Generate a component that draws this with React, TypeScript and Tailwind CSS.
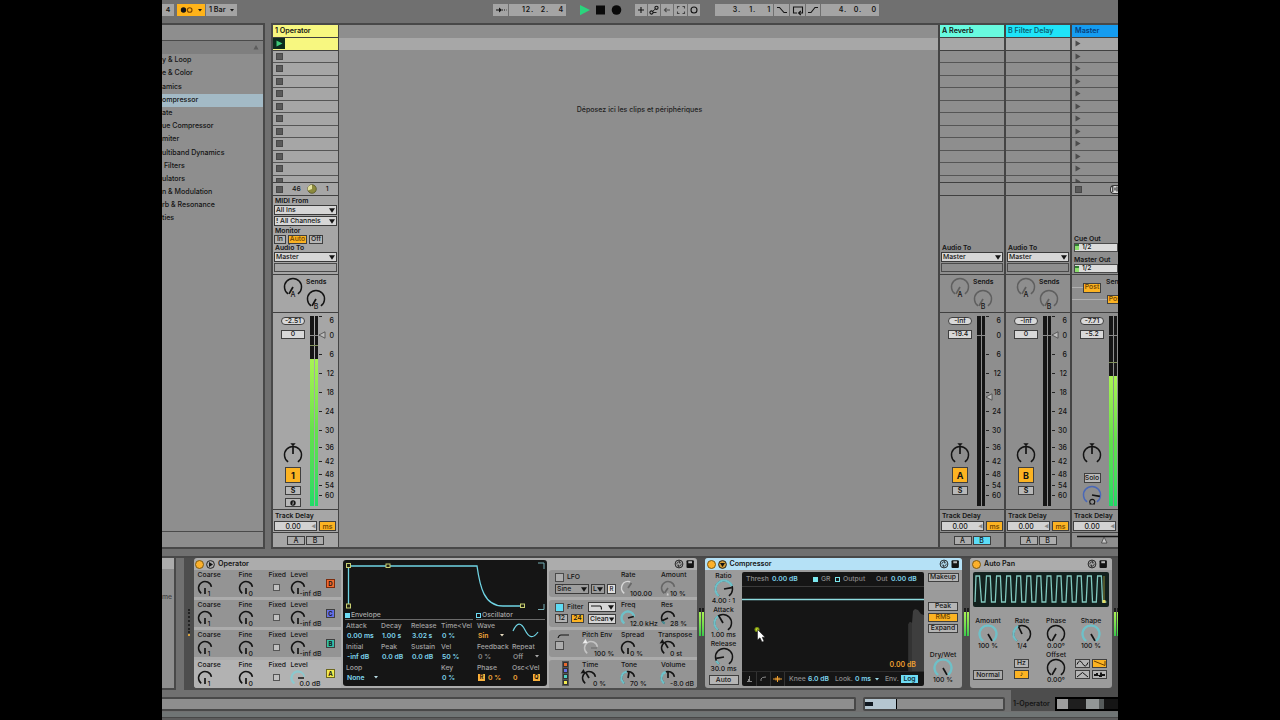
import type { ReactNode } from "react"
import clsx from "clsx"

const INK = "#141414"
const CYAN = "#6fd3e3"

function polar(c: number, r: number, deg: number) {
  const a = ((deg - 90) * Math.PI) / 180
  return [c + r * Math.cos(a), c + r * Math.sin(a)]
}

function arc(c: number, r: number, from: number, to: number) {
  const [x1, y1] = polar(c, r, from)
  const [x2, y2] = polar(c, r, to)
  return `M${x1} ${y1}A${r} ${r} 0 ${to - from > 180 ? 1 : 0} 1 ${x2} ${y2}`
}

type KnobProps = {
  r?: number
  at?: number
  from?: number
  to?: number
  ring?: string
  pointer?: string
  fill?: [number, number]
  fillColor?: string
  inner?: number
  children?: ReactNode
}

// 20px box, angles are clockwise from the top
function Knob({ r = 8.5, at = -150, from = -145, to = 145, ring = INK, pointer = INK, fill, fillColor = "#6fc0c8", inner = 0, children }: KnobProps) {
  const [x1, y1] = polar(10, inner, at)
  const [x2, y2] = polar(10, r - 0.5, at)
  return (
    <svg width="20" height="20" viewBox="0 0 20 20" fill="none" strokeWidth="1.5" className="block shrink-0 overflow-visible">
      <path d={arc(10, r, from, to)} stroke={ring} />
      {fill && <path d={arc(10, r, fill[0], fill[1])} stroke={fillColor} strokeWidth="2.2" />}
      <path d={`M${x1} ${y1}L${x2} ${y2}`} stroke={pointer} strokeWidth="1.7" />
      {children}
    </svg>
  )
}

function Select({ children, className }: { children: ReactNode; className?: string }) {
  return (
    <div className={clsx("flex h-[10px] items-center justify-between border border-[#3a3a3a] pl-px pr-px leading-none", className ?? "bg-[#d6d6d6]")}>
      <span className="whitespace-pre">{children}</span>
      <svg width="6" height="5" viewBox="0 0 6 5"><path d="M0 .3H6L3 4.7Z" fill={INK} /></svg>
    </div>
  )
}

function Btn({ children, className }: { children?: ReactNode; className?: string }) {
  return (
    <div className={clsx("flex shrink-0 items-center justify-center border border-[#3f3f3f] leading-none", className)}>{children}</div>
  )
}

/* ---------- transport ---------- */

function ToolIcon({ children, className }: { children: ReactNode; className: string }) {
  return (
    <div className={clsx("flex h-3 items-center justify-center bg-[#a4a4a4]", className)}>
      <svg width="12" height="12" viewBox="0 0 12 12" fill="none" stroke={INK} strokeWidth="1.1">{children}</svg>
    </div>
  )
}

function Position({ parts, className }: { parts: string[]; className: string }) {
  return (
    <div className={clsx("flex h-3 items-center justify-end bg-[#a4a4a4] pr-0.5 text-[7px] font-semibold", className)}>
      {parts.map((p, i) => (
        <span key={i} className="w-[15px] whitespace-pre text-right tracking-[0.8px]">{p}</span>
      ))}
    </div>
  )
}

function Transport() {
  return (
    <div className="flex h-[23px] items-start bg-[#707070] pt-1">
      <div className="flex h-3 w-[12px] items-center justify-center bg-[#a4a4a4] font-semibold">4</div>
      <div className="ml-[3px] flex h-3 w-[28px] items-center justify-between bg-[#ffb319] px-[3px]">
        <svg width="14" height="8" viewBox="0 0 14 8"><circle cx="3.5" cy="4" r="2.7" fill={INK} /><circle cx="9.7" cy="4" r="2.3" fill="none" stroke="#7a4300" strokeWidth="1.1" /></svg>
        <svg width="4" height="3" viewBox="0 0 4 3"><path d="M0 0H4L2 2.6Z" fill={INK} /></svg>
      </div>
      <div className="ml-px flex h-3 w-[31px] items-center justify-between bg-[#a4a4a4] px-[3px] text-[7.2px] font-semibold">
        1 Bar
        <svg width="4" height="3" viewBox="0 0 4 3"><path d="M0 0H4L2 2.6Z" fill={INK} /></svg>
      </div>
      <ToolIcon className="ml-[256px] w-[15px]"><path d="M1 6H6" /><path d="M4 3.5L7 6L4 8.5Z" fill={INK} stroke="none" /><path d="M7 6H11.5" strokeDasharray="1 1" /></ToolIcon>
      <Position parts={["12.", "2.", "4"]} className="ml-px w-[57px]" />
      <svg width="44" height="12" viewBox="0 0 44 12" className="ml-[13px]">
        <path d="M1 1L11 6L1 11.2Z" fill="#2bd47d" />
        <rect x="17" y="1.5" width="9" height="9" fill="#0a0a0a" />
        <circle cx="37.5" cy="6" r="4.8" fill="#0a0a0a" />
      </svg>
      <div className="ml-3 flex gap-px">
        <ToolIcon className="w-[12px]"><path d="M6 3V9M3 6H9" /></ToolIcon>
        <ToolIcon className="w-[12px]"><circle cx="3.5" cy="8.5" r="1.6" /><circle cx="8.5" cy="3.8" r="1.6" /><path d="M5 8.500L8.500 8.500M4.700 7.300L7.300 5" strokeWidth=".9" /></ToolIcon>
        <ToolIcon className="w-[12px]"><path d="M3 6H9M5.5 4L3.5 6L5.5 8" stroke="#4d4d4d" /></ToolIcon>
        <ToolIcon className="w-[13px]"><path d="M2.5 4.5V2.5H4.5M7.5 2.5H9.5V4.5M9.5 7.5V9.5H7.5M4.5 9.5H2.5V7.5" stroke="#444" /></ToolIcon>
        <ToolIcon className="w-[12px]"><circle cx="6" cy="6" r="3" /></ToolIcon>
      </div>
      <Position parts={["3.", "1.", "1"]} className="ml-[15px] w-[58px]" />
      <div className="ml-px flex gap-px">
        <ToolIcon className="w-[15px]"><path d="M1 3.5H3.5L8 8.5H11" /></ToolIcon>
        <ToolIcon className="w-[15px]"><path d="M5 9H1.5V3H10.5V9H7M8.8 7L6.6 9L8.8 11" /></ToolIcon>
        <ToolIcon className="w-[14px]"><path d="M1 8.5H4L8 3.5H11" /></ToolIcon>
      </div>
      <Position parts={["4.", "0.", "0"]} className="ml-px w-[58px]" />
    </div>
  )
}

/* ---------- browser ---------- */

const browserItems = [
  "y & Loop", "e & Color", "amics", "ompressor", "ate", "ue Compressor", "miter",
  "ultiband Dynamics", " Filters", "ulators", "n & Modulation", "rb & Resonance", "ties",
]

function Browser() {
  return (
    <div className="flex h-[526px] w-[103px] shrink-0 flex-col border-y-2 border-r-2 border-[#484848] bg-[#8e8e8e]">
      <div className="h-[16px] shrink-0 border-b border-[#4a4a4a]" />
      <div className="flex h-[13px] shrink-0 items-center justify-end bg-[#7f7f7f] pr-1">
        <svg width="6" height="6" viewBox="0 0 6 6"><path d="M3 0L5.5 4.5H.5Z" fill="#5c5c5c" /></svg>
      </div>
      <div className="grow">
        {browserItems.map((t) => (
          <div
            key={t}
            className={clsx("flex h-[13.18px] items-center whitespace-pre text-[7.05px]", t === "ompressor" && "bg-[#a3bac6]")}
          >
            {t}
          </div>
        ))}
      </div>
      <div className="h-[16px] border-t border-[#4a4a4a]" />
    </div>
  )
}

/* ---------- session ---------- */

const slots = Array.from({ length: 11 }, (_, i) => i)

function Square() {
  return <div className="size-[7px] border border-[#484848] bg-[#5a5a5a]" />
}

function Slots({ kind }: { kind: "track" | "return" | "master" }) {
  const tri = <svg width="6" height="7" viewBox="0 0 6 7"><path d="M.5 .5L5.5 3.5L.5 6.5Z" fill="#4c4c4c" /></svg>
  return (
    <div className="h-[145px] overflow-hidden border-b border-[#404040]">
      <div className={clsx("flex h-[12.5px] items-center border-b border-[#404040]", kind === "track" ? "bg-[#f7f780]" : "bg-[#a7a7a7] pl-[3px]")}>
        {kind === "track" && (
          <div className="flex h-[11px] w-[12px] items-center justify-center bg-[#0d2b1c]">
            <svg width="7" height="7" viewBox="0 0 7 7"><path d="M.5 .5L6.5 3.5L.5 6.5Z" fill="#3ec878" /></svg>
          </div>
        )}
        {kind === "master" && tri}
      </div>
      {slots.map((i) => (
        <div key={i} className="flex h-[12.5px] items-center border-b border-[#555] pl-[3px]">
          {kind === "track" && <Square />}
          {kind === "master" && tri}
        </div>
      ))}
    </div>
  )
}

// distance in pixels of every mark from the one above it
const scale = [
  { t: "6", d: 4.5 }, { t: "0", d: 15 }, { t: "6", d: 19.5 }, { t: "12", d: 19 },
  { t: "18", d: 19 }, { t: "24", d: 18.5 }, { t: "30", d: 19.5 }, { t: "36", d: 16.5 },
  { t: "42", d: 14.5 }, { t: "48", d: 12.5 }, { t: "54", d: 11 }, { t: "60", d: 10.5 },
]

function Scale() {
  return (
    <div className="w-[16px] pl-px">
      {scale.map((m, i) => (
        <div key={i} className="flex items-end justify-between" style={{ height: m.d }}>
          <span className={clsx("h-px w-[3px] shrink-0 bg-[#222]", i === 0 && "-translate-y-1", i === 1 && "opacity-0")} />
          <span className="translate-y-1/2 text-[7px] leading-[8px]">{m.t}</span>
        </div>
      ))}
    </div>
  )
}

function Meter({ empty }: { empty: number }) {
  return (
    <div className="relative flex h-[190px] w-[8px] shrink-0 gap-px">
      {[0, 1].map((i) => (
        <div key={i} className="flex grow flex-col bg-[#151515]">
          <div style={{ height: empty }} />
          <div className="grow bg-linear-to-b from-[#a8f354] via-[#62e04c] to-[#1edb66]" />
        </div>
      ))}
      {empty < 190 && <div className="absolute inset-x-0 h-px bg-[#7f8f5a]" style={{ top: empty - 14 }} />}
      <div className="absolute inset-x-0 top-[19px] h-px bg-[#8a8a8a]" />
    </div>
  )
}

function Handle() {
  return <svg width="8" height="8" viewBox="0 0 8 8"><path d="M7 .8V7.2L1 4Z" fill="#bdbdbd" stroke="#3a3a3a" strokeWidth=".7" /></svg>
}

function PanKnob() {
  return (
    <Knob at={0} inner={1}>
      <path d="M7.3 -1.8H12.7L10 1.2Z" fill={INK} />
    </Knob>
  )
}

function Sends({ dim }: { dim?: boolean }) {
  const c = dim ? "#5f5f5f" : INK
  return (
    <div className="flex h-[38px] border-b border-[#404040]">
      <div className="ml-[10px] mt-[2px] w-[20px] text-center">
        <Knob ring={c} pointer={c} />
        <div className="-mt-[6px] text-[7px] leading-[8px]">A</div>
      </div>
      <div className="ml-[3px] mt-[3px] w-[20px]">
        <div className="whitespace-nowrap font-semibold leading-[8px]">Sends</div>
        <div className="mt-[3px]"><Knob ring={c} pointer={c} /></div>
        <div className="-mt-[6px] text-center text-[7px] leading-[8px]">B</div>
      </div>
    </div>
  )
}

function TrackDelay({ children, unit }: { children: ReactNode; unit?: string }) {
  return (
    <>
      <div className="h-[23px] border-b border-[#404040] pl-px pt-0.5">
        <div className="whitespace-nowrap pl-px font-semibold leading-[8px]">Track Delay</div>
        <div className="mt-[1px] flex gap-px">
          <Btn className="h-[10px] w-[43px] bg-[#d2d2d2] text-[7px]">
            <span className="grow text-center">0.00</span>
            <span className="text-[5px] text-[#888]">◀</span>
          </Btn>
          {unit && <Btn className="ml-px h-[10px] w-[17px] bg-[#fcb322] text-[7px] text-[#6b3f00]">{unit}</Btn>}
        </div>
      </div>
      <div className="flex h-[14px] items-center justify-center gap-px">{children}</div>
    </>
  )
}

type StripProps = {
  title: string
  head: string
  body: string
  kind: "track" | "return"
  letter: string
  peak: string
  vol: string
  handle: number
  crossB?: boolean
}

function Strip({ title, head, body, kind, letter, peak, vol, handle, crossB }: StripProps) {
  const track = kind === "track"
  return (
    <div className={clsx("h-[523px] w-[66px] shrink-0 border-[#444]", track ? "border-r" : "border-r-2", body)}>
      <div className={clsx("flex h-[13px] items-center border-b border-[#404040] pl-0.5 text-[7.2px] font-semibold", head)}>{title}</div>
      <Slots kind={kind} />
      <div className="flex h-[13px] items-center border-b border-[#404040] pl-[3px]">
        {track && (
          <>
            <Square />
            <span className="ml-[9px]">46</span>
            <svg width="10" height="10" viewBox="0 0 10 10" className="ml-[6px]">
              <circle cx="5" cy="5" r="4.3" fill="#8c8a3c" stroke="#55542a" strokeWidth=".8" />
              <path d="M5 5V.7A4.3 4.3 0 0 0 1 6.5Z" fill="#e4e2a0" />
            </svg>
            <span className="ml-[9px]">1</span>
          </>
        )}
      </div>
      <div className="flex h-[79px] flex-col justify-end border-b border-[#404040] px-px pb-0.5">
        {track && (
          <>
            <div className="pl-px font-semibold leading-[8px]">MIDI From</div>
            <Select>All Ins</Select>
            <Select className="mt-px bg-[#d6d6d6]"><span className="font-bold">⁞</span> All Channels</Select>
            <div className="mt-px pl-px font-semibold leading-[8px]">Monitor</div>
            <div className="flex gap-0.5">
              <Btn className="h-[9px] w-[12px] bg-[#b5b5b5]">In</Btn>
              <Btn className="h-[9px] w-[19px] bg-[#fcb322] text-[#6b3f00]">Auto</Btn>
              <Btn className="h-[9px] w-[14px] bg-[#b5b5b5]">Off</Btn>
            </div>
          </>
        )}
        <div className="pl-px font-semibold leading-[8px]">Audio To</div>
        <Select>Master</Select>
        <div className="mt-px h-[9px] border border-[#4a4a4a]" />
      </div>
      <Sends dim={!track} />
      <div className="flex h-[197px] border-b border-[#404040] pt-[3px]">
        <div className="flex w-[37px] flex-col items-center pl-[3px]">
          <Btn className="mt-px h-[8px] w-[24px] rounded-full bg-[#d8d8d8]">{peak}</Btn>
          <Btn className="mt-[5px] h-[9px] w-[24px] bg-[#d8d8d8]">{vol}</Btn>
          <div className="mt-[106px]"><PanKnob /></div>
          <Btn className="mt-[2px] h-[16px] w-[16px] bg-[#fcb322] text-[9px] font-bold">{letter}</Btn>
          <Btn className="mt-[3px] h-[9px] w-[16px] bg-[#b8b8b8] text-[7px] font-bold">S</Btn>
          {track && (
            <Btn className="mt-[3px] h-[9px] w-[16px] bg-[#b8b8b8]">
              <svg width="6" height="6" viewBox="0 0 6 6"><circle cx="3" cy="3" r="2.7" fill={INK} /><path d="M2.3 4.2H3.2V1.5" stroke="#ccc" strokeWidth=".8" fill="none" /></svg>
            </Btn>
          )}
        </div>
        <Meter empty={track ? 43 : 190} />
        <div className="relative">
          <Scale />
          <div className="absolute left-0" style={{ top: handle }}><Handle /></div>
        </div>
      </div>
      <TrackDelay unit="ms">
        <Btn className="h-[9px] w-[18px] bg-[#acacac] text-[7px]">A</Btn>
        <Btn className={clsx("h-[9px] w-[18px] text-[7px]", crossB ? "bg-[#5bdcf7]" : "bg-[#acacac]")}>B</Btn>
      </TrackDelay>
    </div>
  )
}

function Output({ label }: { label: string }) {
  return (
    <div>
      <div className="whitespace-nowrap font-semibold leading-[9px]">{label}</div>
      <div className="flex h-[9px] items-center gap-[3px] border border-[#4a4a4a] bg-[#dcdcdc] leading-none">
        <span className="h-[6px] w-[4px] border-t-2 border-[#327d35] bg-[#8de06e]" />1/2
      </div>
    </div>
  )
}

function MasterStrip() {
  return (
    <div className="h-[523px] w-[47px] overflow-hidden bg-[#8e8e8e]">
      <div className="flex h-[13px] items-center border-b border-[#404040] bg-[#159cf0] pl-[3px] text-[7.2px] font-semibold text-[#07407c]">Master</div>
      <Slots kind="master" />
      <div className="flex h-[13px] items-center justify-between border-b border-[#404040] pl-[3px]">
        <Square />
        <div className="flex h-[9px] w-[8px] items-center rounded-l-sm border border-r-0 border-[#333] bg-[#d8d8d8] pl-px">
          <svg width="6" height="6" viewBox="0 0 6 6"><path d="M.8 0V6M3 1.5V4.5M5 .5V5.5" stroke={INK} /></svg>
        </div>
      </div>
      <div className="flex h-[79px] flex-col justify-end gap-[3.5px] border-b border-[#404040] pb-px pl-0.5"><Output label="Cue Out" /><Output label="Master Out" /></div>
      <div className="flex h-[38px] flex-col border-b border-[#404040] pt-[4px]">
        <div className="flex h-[13px] items-center">
          <span className="mt-1 h-px w-[11px] shrink-0 bg-[#b0b0b0]" />
          <Btn className="mt-1 h-[10px] w-[18px] bg-[#fcb322] text-[#6b3f00]">Post</Btn>
          <span className="-mt-[6px] ml-[5px] font-semibold">Sends</span>
        </div>
        <div className="mt-[2px] flex h-[11px] items-center">
          <span className="h-px w-[35px] shrink-0 bg-[#b0b0b0]" />
          <Btn className="h-[9px] w-[18px] bg-[#fcb322] text-[#6b3f00]">Post</Btn>
        </div>
      </div>
      <div className="flex h-[197px] border-b border-[#404040] pt-[3px]">
        <div className="flex w-[37px] shrink-0 flex-col items-center pl-[3px]">
          <Btn className="mt-px h-[8px] w-[24px] rounded-full bg-[#d8d8d8]">-7.71</Btn>
          <Btn className="mt-[5px] h-[9px] w-[24px] bg-[#d8d8d8]">-5.2</Btn>
          <div className="mt-[106px]"><PanKnob /></div>
          <Btn className="mt-[8px] h-[10px] w-[17px] bg-[#b8b8b8]">Solo</Btn>
          <div className="mt-[2px]">
            <Knob ring="#4a68b8" at={100}>
              <path d="M7.5 19H9A2.5 2.5 0 1 1 11.5 19H13" stroke={INK} strokeWidth="1.2" />
            </Knob>
          </div>
        </div>
        <Meter empty={60} />
      </div>
      <TrackDelay>
        <svg width="46" height="12" viewBox="0 0 46 12" fill="none"><path d="M5 2.5H46" stroke={INK} strokeWidth="1.5" /><path d="M32 3L35 9H29.5Z" fill="#c8c8c8" stroke="#333" strokeWidth=".7" /></svg>
      </TrackDelay>
    </div>
  )
}

function Session() {
  return (
    <div className="ml-[6px] flex h-[526px] grow overflow-hidden border-y-2 border-l-2 border-[#484848] bg-[#8e8e8e]">
      <Strip title="1 Operator" head="bg-[#f7f780]" body="bg-[#a6a6a6]" kind="track" letter="1" peak="-2.51" vol="0" handle={15} />
      <div className="w-[601px] shrink-0 border-r-2 border-[#444] text-center">
        <div className="mt-[13px] h-[12px] bg-[#a7a7a7]" />
        <div className="pl-[2px] pt-[55px] text-[7px] tracking-[0.02px] text-[#222]">Déposez ici les clips et périphériques</div>
      </div>
      <Strip title="A Reverb" head="bg-[#68fadf]" body="bg-[#8e8e8e]" kind="return" letter="A" peak="-Inf" vol="-19.4" handle={77} crossB />
      <Strip title="B Filter Delay" head="bg-[#1fe4f8] text-[#0a6274]" body="bg-[#8e8e8e]" kind="return" letter="B" peak="-Inf" vol="0" handle={15} />
      <MasterStrip />
    </div>
  )
}

/* ---------- devices ---------- */

function PowerDot() {
  return <span className="size-[9px] rounded-full border border-[#7d5a14] bg-[#fdb12b]" />
}

function TitleIcons() {
  return (
    <svg width="21" height="10" viewBox="0 0 21 10" fill="none" className="ml-auto">
      <circle cx="5" cy="5" r="3.9" stroke={INK} strokeWidth=".9" />
      <path d="M3 5.5A2 2 0 0 1 6 3.2M7 4.5A2 2 0 0 1 4 6.8M5.2 2.4L6.4 3.4L5 4.2M4.9 7.6L3.6 6.7L5 5.8" stroke={INK} strokeWidth=".8" />
      <rect x="12.5" y="1.3" width="7.4" height="7.6" rx="1" fill={INK} />
      <path d="M14.3 2.2H18V4.2H14.3Z" fill="#bbb" />
    </svg>
  )
}

function DevMeter() {
  return (
    <div className="mt-[50px] flex h-[28px] w-[8px] shrink-0 justify-center gap-px">
      {[0, 1].map((i) => (
        <div key={i} className="flex w-[2px] flex-col bg-[#1c1c1c]">
          <div className="h-1" />
          <div className="grow bg-linear-to-b from-[#a8f354] to-[#35c94a]" />
        </div>
      ))}
    </div>
  )
}

// label on top, knob under it, value tucked in at the lower right of the ring
function Dial({ label, value, className, children, shift = "left-[11px]" }: { label: string; value: string; className: string; children: ReactNode; shift?: string }) {
  return (
    <div className={clsx("relative shrink-0", className)}>
      <div className="whitespace-nowrap leading-[8px]">{label}</div>
      <div className="-ml-[3px] -mt-px">{children}</div>
      <div className={clsx("absolute top-[19px] whitespace-nowrap leading-[8px]", shift)}>{value}</div>
    </div>
  )
}

const oscillators = [
  { id: "D", color: "bg-[#ee6a2f] border-[#7c2b0c]" },
  { id: "C", color: "bg-[#6670e6] border-[#2c3390]" },
  { id: "B", color: "bg-[#35bfa5] border-[#0e5e4e]" },
  { id: "A", color: "bg-[#f2ea4f] border-[#6d681c]" },
]

function SmallKnob(props: KnobProps) {
  return <Knob r={6.5} from={-145} to={80} at={180} {...props} />
}

function OscRow({ id, color }: { id: string; color: string }) {
  const last = id === "A"
  return (
    <div className={clsx("flex pl-[3.5px] pt-px", last ? "h-[29px] bg-[#b2b2b2]" : "mb-[3px] h-[27px] bg-[#949494]")}>
      <Dial label="Coarse" value="1" className="w-[41px]" shift="left-[10px]"><SmallKnob /></Dial>
      <Dial label="Fine" value="0" className="w-[30px]" shift="left-[10px]"><SmallKnob /></Dial>
      <div className="w-[22px]">
        <div className="leading-[8px]">Fixed</div>
        <div className="ml-[4px] mt-[5px] size-[7px] border border-[#555] bg-[#c0c0c0]" />
      </div>
      <Dial label="Level" value={last ? "0.0 dB" : "-inf dB"} className="w-[35.5px]" shift="left-[9px]">
        {last ? <SmallKnob ring="#8cc8ce" fill={[-145, 30]} fillColor="#8cc8ce" at={90} /> : <SmallKnob />}
      </Dial>
      <Btn className={clsx("mt-[8px] size-[9px] text-[6px] font-bold", color)}>{id}</Btn>
    </div>
  )
}

function Param({ label, value, tone = "text-[#7fd6ee]" }: { label: string; value: ReactNode; tone?: string }) {
  return (
    <div className="h-[21px] whitespace-nowrap leading-[9.5px]">
      <div className="text-[#a2a2a2]">{label}</div>
      <div className={clsx("flex items-center pl-px font-semibold", tone)}>{value}</div>
    </div>
  )
}

function Caret({ color }: { color: string }) {
  return <svg width="4" height="3" viewBox="0 0 4 3"><path d="M0 0H4L2 2.6Z" fill={color} /></svg>
}

function OperatorDisplay() {
  return (
    <div className="mx-[2px] mt-[2px] h-[126px] w-[204px] shrink-0 rounded-[3px] bg-[#151515]">
      <svg width="204" height="51" viewBox="0 0 204 51" fill="none" className="block">
        <path d="M5.5 46V6H134C137 27 141 46 160 46H179" stroke={CYAN} strokeWidth="1.3" />
        <path d="M195 3H201V9M201 44V49.5H195" stroke="#75aeb5" />
        <g stroke="#c8cf72" fill="#232313">
          <rect x="3.5" y="3.5" width="4" height="4" /><rect x="43" y="4" width="4" height="3.5" />
          <rect x="3.5" y="44" width="4" height="4" /><rect x="177.5" y="44" width="4" height="3.5" />
        </g>
      </svg>
      <div className="flex h-[9px] gap-[3px] px-0.5 leading-[8px] text-[#a8a8a8]">
        <div className="flex w-[128px] items-center gap-px border-b border-[#6b6b6b]"><span className="size-[5px] bg-[#6edcf5]" />Envelope</div>
        <div className="flex grow items-center gap-px border-b border-[#6b6b6b]"><span className="size-[5px] border border-[#6edcf5]" />Oscillator</div>
      </div>
      <div className="mt-px flex pl-[3px]">
        <div className="w-[35px]"><Param label="Attack" value="0.00 ms" /><Param label="Initial" value="-inf dB" /><Param label="Loop" value={<>None<span className="w-2.5" /><Caret color="#b8dce5" /></>} /></div>
        <div className="w-[30px]"><Param label="Decay" value="1.00 s" /><Param label="Peak" value="0.0 dB" /></div>
        <div className="w-[30px]"><Param label="Release" value="3.02 s" /><Param label="Sustain" value="0.0 dB" /></div>
        <div className="w-[36px]"><Param label="Time<Vel" value="0 %" /><Param label="Vel" value="50 %" /><Param label="Key" value="0 %" /></div>
        <div className="w-[35px]">
          <Param label="Wave" tone="text-[#f5a93a]" value={<>Sin<span className="w-3" /><Caret color="#e8dcc0" /></>} />
          <Param label="Feedback" tone="text-[#8c8c8c]" value="0 %" />
          <Param label="Phase" tone="text-[#f5a93a]" value={<><span className="mr-[3px] flex size-[7px] items-center justify-center bg-[#f8b13c] text-[5.5px] text-black">R</span>0 %</>} />
        </div>
        <div className="w-[28px]">
          <svg width="27" height="21" viewBox="0 0 27 21" fill="none" className="block"><path d="M1 10C5 1 9 1 13 9S21 18 26 11" stroke={CYAN} strokeWidth="1.2" /></svg>
          <Param label="Repeat" tone="text-[#8c8c8c]" value={<>Off<span className="w-3" /><Caret color="#aaa" /></>} />
          <Param label="Osc<Vel" tone="text-[#f5a93a]" value={<>0<span className="ml-auto flex size-[7px] items-center justify-center bg-[#f8b13c] text-[5.5px] text-black">Q</span></>} />
        </div>
      </div>
    </div>
  )
}

function Section({ children, className = "h-[27px]" }: { children: ReactNode; className?: string }) {
  return <div className={clsx("mb-[3px] flex rounded-l-[3px] bg-[#949494] pl-[6px] pt-px", className)}>{children}</div>
}

function OperatorGlobals() {
  const arrow = <path d="M1.5 5.5L4.5 1L6.5 5Z" fill={INK} stroke="none" />
  return (
    <div className="grow pt-[12px]">
      <Section>
        <div className="w-[66px] pt-0.5">
          <div className="flex items-center gap-[3px] leading-none"><span className="size-[9px] border border-[#4a4a4a] bg-[#adadad]" />LFO</div>
          <div className="mt-[2px] flex gap-[2px]">
            <Select className="w-[34px] bg-[#9d9d9d]">Sine</Select>
            <Select className="w-[14px] bg-[#9d9d9d]">L</Select>
            <Btn className="h-[10px] w-[9px] bg-[#dedede] text-[6px]">R</Btn>
          </div>
        </div>
        <Dial label="Rate" value="100.00" className="w-[40px]" shift="left-[9px]"><SmallKnob ring="#d8d8d8" pointer="#666" at={35} to={20} /></Dial>
        <Dial label="Amount" value="10 %" className="w-[30px]" shift="left-[9px]"><SmallKnob ring="#666" pointer="#666" at={-145} fill={[-185, -170]} fillColor="#ccc" /></Dial>
      </Section>
      <Section>
        <div className="flex w-[66px] gap-1 pt-px">
          <div className="w-[29px]">
            <div className="flex h-[10px] items-center gap-[3px] leading-none"><span className="size-[9px] shrink-0 border border-[#4a4a4a] bg-[#5fdcf5]" />Filter</div>
            <div className="mt-[2px] flex gap-[3px]"><Btn className="h-[9px] w-[13px] bg-[#b2b2b2]">12</Btn><Btn className="h-[9px] w-[13px] bg-[#fcb322]">24</Btn></div>
          </div>
          <div className="w-[28px]">
            <Select><svg width="16" height="5" viewBox="0 0 16 5" fill="none"><path d="M1 1H10Q11.5 1 11.5 4.5" stroke={INK} strokeWidth="1.1" /></svg></Select>
            <Select className="mt-[2px] bg-[#d6d6d6]">Clean</Select>
          </div>
        </div>
        <Dial label="Freq" value="12.0 kHz" className="w-[40px]" shift="left-[9px]"><SmallKnob ring="#6fc0c8" fill={[-145, 70]} at={75} /></Dial>
        <Dial label="Res" value="28 %" className="w-[30px]" shift="left-[9px]"><SmallKnob fill={[-150, -120]} fillColor="#4a8f96" at={-115} /></Dial>
      </Section>
      <Section>
        <div className="w-[27px] pt-[3px]">
          <svg width="14" height="4" viewBox="0 0 14 4" fill="none" className="block"><path d="M3 4Q4 1 6 1H14" stroke={INK} strokeWidth="1.1" /></svg>
          <div className="mt-[3px] size-[9px] border border-[#4a4a4a] bg-[#adadad]" />
        </div>
        <Dial label="Pitch Env" value="100 %" className="w-[39px]" shift="left-[12px]"><div className="pl-[2px]"><SmallKnob ring="#c4c4c4" pointer="#777" at={90}><path d="M1.5 5.5L4.5 1L6.5 5Z" fill="#eee" /></SmallKnob></div></Dial>
        <Dial label="Spread" value="0 %" className="w-[37px]" shift="left-[9px]"><SmallKnob /></Dial>
        <Dial label="Transpose" value="0 st" className="w-[36px]" shift="left-[12px]"><div className="pl-[3px]"><SmallKnob at={-30}>{arrow}</SmallKnob></div></Dial>
      </Section>
      <Section className="h-[29px]">
        <div className="flex w-[27px] flex-col gap-px pl-[8px] pt-px">
          <span className="size-[5px] border border-[#333] bg-[#e8682d] outline outline-[#555]" />
          <span className="size-[5px] border border-[#333] bg-[#6670e6] outline outline-[#555]" />
          <span className="size-[5px] border border-[#333] bg-[#50d0c5] outline outline-[#555]" />
          <span className="size-[5px] border border-[#333] bg-[#f2ea4f] outline outline-[#555]" />
        </div>
        <Dial label="Time" value="0 %" className="w-[39px]" shift="left-[11px]"><SmallKnob at={-30}>{arrow}</SmallKnob></Dial>
        <Dial label="Tone" value="70 %" className="w-[40px]" shift="left-[9px]"><SmallKnob fill={[-145, -10]} at={10} /></Dial>
        <Dial label="Volume" value="-8.0 dB" className="w-[30px]" shift="left-[9px]"><SmallKnob fill={[-145, -20]} at={0} /></Dial>
      </Section>
    </div>
  )
}

function Operator() {
  return (
    <div className="flex h-[130px] w-[503px] shrink-0 overflow-hidden rounded-[3px] bg-[#acacac]">
      <div className="w-[147px] shrink-0">
        <div className="flex h-[12px] items-center gap-[2px] pl-px text-[7.2px] font-semibold">
          <PowerDot />
          <svg width="9" height="9" viewBox="0 0 9 9"><circle cx="4.5" cy="4.5" r="3.9" fill="none" stroke={INK} strokeWidth=".9" /><path d="M3 2L7 4.5L3 7Z" fill={INK} /></svg>
          <span className="pl-px">Operator</span>
        </div>
        {oscillators.map((o) => <OscRow key={o.id} {...o} />)}
      </div>
      <OperatorDisplay />
      <div className="relative w-[148px] shrink-0">
        <OperatorGlobals />
        <div className="absolute right-[2px] top-px"><TitleIcons /></div>
      </div>
    </div>
  )
}

function RoundDial({ label, value, children }: { label: string; value: string; children: ReactNode }) {
  return (
    <div className="flex flex-col items-center whitespace-nowrap leading-[8px]">
      <div>{label}</div>
      <div className="-my-[1.5px]">{children}</div>
      <div>{value}</div>
    </div>
  )
}

function Compressor() {
  return (
    <div className="h-[130px] w-[257px] shrink-0 overflow-hidden rounded-[3px] bg-[#9b9b9b]">
      <div className="flex h-[12px] items-center gap-[2px] bg-[#b5e1f6] pl-[1.5px] pr-[2px] text-[7.1px] font-semibold">
        <PowerDot />
        <svg width="9" height="9" viewBox="0 0 9 9"><circle cx="4.5" cy="4.5" r="3.9" fill="#d59e37" stroke={INK} strokeWidth=".9" /><path d="M2 3H7L4.5 7Z" fill={INK} /></svg>
        <span className="pl-px">Compressor</span>
        <TitleIcons />
      </div>
      <div className="flex h-[118px] pt-[2px]">
        <div className="flex w-[37px] shrink-0 flex-col items-center">
          <RoundDial label="Ratio" value="4.00 : 1"><Knob fill={[-145, 70]} at={80} /></RoundDial>
          <div className="mt-px"><RoundDial label="Attack" value="1.00 ms"><Knob fill={[-145, -35]} at={-30} /></RoundDial></div>
          <div className="mt-px"><RoundDial label="Release" value="30.0 ms"><Knob fill={[-145, -115]} at={-100} /></RoundDial></div>
          <Btn className="mt-[2px] h-[10px] w-[30px] bg-[#b5b5b5]">Auto</Btn>
        </div>
        <div className="flex h-[114px] w-[182px] shrink-0 flex-col rounded-[2px] bg-[#151515] font-medium text-[#7fd6ee]">
          <div className="flex h-[15px] items-center border-b border-[#3a3a3a] pl-[4px]">
            <span className="w-[26px] text-[#8c8c8c]">Thresh</span><span className="w-[41px] font-semibold">0.00 dB</span>
            <span className="size-[5px] bg-[#7be8ee]" /><span className="ml-[3px] w-[14px] text-[#8c8c8c]">GR</span>
            <span className="size-[5px] border border-[#7be8ee]" /><span className="ml-[3px] w-[33px] text-[#8c8c8c]">Output</span>
            <span className="w-[15px] text-[#8c8c8c]">Out</span><span className="font-semibold">0.00 dB</span>
          </div>
          <svg width="182" height="84" viewBox="0 1 182 84" fill="none" className="block">
            <path d="M0 13.5H182" stroke="#8fdcdf" strokeWidth="1.4" />
            <path d="M166.500 85V38L168 36L170 37L171 25L173 23L176 24L179 28L182 29V85Z" fill="#3e3e3e" />
            <path d="M166.500 85V38L168 36L170 37V85Z" fill="#333" />
            <circle cx="15" cy="43.500" r="2.500" fill="#7d9614" /><circle cx="15" cy="43.500" r="1.200" fill="#cbe02b" />
            <path d="M15.500 43.500V54L18 51.800L20 56L22 55.200L20.200 51.200H23Z" fill="#fff" stroke="#111" strokeWidth=".5" />
            <text x="147.500" y="80.500" fill="#f0a030" fontSize="7" fontWeight="600">0.00 dB</text>
          </svg>
          <div className="flex h-[15px] items-center border-t border-[#2c2c2c]">
            <svg width="43" height="14" viewBox="0 0 43 14" fill="none">
              <path d="M14.5 0V14M28.5 0V14M42.5 0V14" stroke="#333" />
              <path d="M7.5 4V9.5M6.5 7V9.5M5 9.5H10" stroke="#888" />
              <path d="M19 9V7Q19.5 5 24 5" stroke="#888" />
              <path d="M31 7H40M34 5.5V8.5M35.5 4V10M37 5.5V8.5" stroke="#f0a030" />
            </svg>
            <span className="ml-[4px] w-[19px] text-[#8c8c8c]">Knee</span><span className="w-[27px] font-semibold">6.0 dB</span>
            <span className="w-[20px] text-[#8c8c8c]">Look.</span><span className="w-[20px] font-semibold">0 ms</span><Caret color="#9adbe8" />
            <span className="ml-[6px] w-[16px] text-[#8c8c8c]">Env.</span>
            <span className="flex h-[8px] w-[17px] items-center justify-center bg-[#6edcf5] font-semibold leading-none text-[#10333c]">Log</span>
          </div>
        </div>
        <div className="flex w-[38px] shrink-0 flex-col items-center">
          <Btn className="mt-px h-[9px] w-[31px] bg-[#b5b5b5]">Makeup</Btn>
          <Btn className="mt-[20px] h-[9px] w-[30px] bg-[#b5b5b5]">Peak</Btn>
          <Btn className="mt-[2px] h-[9px] w-[30px] bg-[#fcb322] text-[#6b3f00]">RMS</Btn>
          <Btn className="mb-[18px] mt-[2px] h-[9px] w-[30px] bg-[#b5b5b5]">Expand</Btn>
          <RoundDial label="Dry/Wet" value="100 %"><Knob ring="#6fc0c8" fill={[-145, 145]} at={150} /></RoundDial>
        </div>
      </div>
    </div>
  )
}

const panWave = "M2 30L3 4H6.5L8.500 30H12L" + Array.from({ length: 12 }, (_, i) => {
  const x = 13.5 + i * 10.1
  return `${x} 4H${x + 3.8}L${x + 5} 30H${x + 8.8}`
}).join("L")

function AutoPan() {
  return (
    <div className="h-[130px] w-[142px] shrink-0 rounded-[3px] bg-[#9b9b9b]">
      <div className="flex h-[12px] items-center gap-[3px] rounded-t-[3px] bg-[#acacac] pl-0.5 pr-[4px] text-[7.1px] font-semibold"><PowerDot />Auto Pan<TitleIcons /></div>
      <svg width="136" height="35" viewBox="0 0 136 35" fill="none" className="ml-[3px] mt-[2px] block rounded-[2px] bg-[#13211e]">
        <path d={panWave} stroke="#82c9bf" strokeWidth="1.3" />
        <path d="M131 4V31" stroke="#8d8a36" /><rect x="129.5" y="28" width="3" height="3" fill="#e5de65" />
      </svg>
      <div className="mt-[10px] flex">
        <div className="w-[36px]"><RoundDial label="Amount" value="100 %"><Knob ring="#6fc0c8" fill={[-145, 145]} at={150} /></RoundDial></div>
        <div className="w-[32px]"><RoundDial label="Rate" value="1/4"><Knob fill={[-145, -25]} at={-25} /></RoundDial></div>
        <div className="w-[36px]"><RoundDial label="Phase" value="0.00°"><Knob /></RoundDial></div>
        <div className="w-[34px]"><RoundDial label="Shape" value="100 %"><Knob ring="#6fc0c8" fill={[-145, 145]} at={150} /></RoundDial></div>
      </div>
      <div className="mt-px flex">
        <Btn className="ml-[3px] mt-[19px] h-[10px] w-[30px] bg-[#acacac]">Normal</Btn>
        <div className="ml-[11px] mt-[8px]">
          <Btn className="h-[9px] w-[15px] bg-[#b5b5b5]">Hz</Btn>
          <Btn className="mt-[2px] h-[9px] w-[15px] bg-[#fcb322]">♪</Btn>
        </div>
        <div className="ml-[9px] w-[36px]"><RoundDial label="Offset" value="0.00°"><Knob /></RoundDial></div>
        <div className="ml-px mt-[8px] grid grid-cols-[15px_15px] content-start gap-[2px]">
          <Btn className="h-[9px] bg-[#b5b5b5]"><svg width="13" height="7" viewBox="0 0 13 7" fill="none"><path d="M1 4.500Q3.500 -2 6.500 3.500T12 2.500" stroke={INK} /></svg></Btn>
          <Btn className="h-[9px] bg-[#fcb322]"><svg width="13" height="7" viewBox="0 0 13 7" fill="none"><path d="M1 1L12 5.5V1" stroke="#6b3f00" /></svg></Btn>
          <Btn className="h-[9px] bg-[#b5b5b5]"><svg width="13" height="7" viewBox="0 0 13 7" fill="none"><path d="M1 6L6.5 1.5L12 6" stroke={INK} /></svg></Btn>
          <Btn className="h-[9px] bg-[#b5b5b5]"><svg width="13" height="7" viewBox="0 0 13 7"><path d="M1 3H3V2H5V4H7V1.5H9V3H12V5H9V6H6V5H1Z" fill={INK} /></svg></Btn>
        </div>
      </div>
    </div>
  )
}

function Devices() {
  return (
    <div className="flex h-[134px] overflow-hidden border-t-2 border-[#484848] bg-[#4d4d4d]">
      <div className="w-[14px] shrink-0 border-b-2 border-r-2 border-[#484848] bg-[#8e8e8e]">
        <div className="h-[11px] bg-[#acacac]" />
        <div className="pt-[24px] leading-[8px] text-[#444]">me</div>
      </div>
      <div className="w-[8px] shrink-0 bg-[#707070]" />
      <div className="flex w-[10px] shrink-0 flex-col items-center pt-[51px]">
        <span className="h-[24px] border-l-2 border-dotted border-[#222]" />
        <span className="mt-px size-[2px] bg-[#d9a340]" />
      </div>
      <Operator />
      <DevMeter />
      <Compressor />
      <DevMeter />
      <AutoPan />
      <DevMeter />
    </div>
  )
}

function StatusBar() {
  return (
    <div className="flex h-[30px] flex-col">
      <div className="flex h-[22px] bg-[#707070]">
        <div className="mt-[7px] h-[14px] w-[694px] rounded-r-[2px] border-2 border-l-0 border-[#484848] bg-[#8e8e8e]" />
        <div className="ml-[7px] mt-[7px] flex h-[14px] w-[142px] items-center rounded-[2px] border-2 border-[#484848] bg-[#8e8e8e]">
          <div className="flex h-full w-[32px] items-center border-r border-black bg-[#b5c6d0]"><span className="h-[4px] w-[8px] bg-[#101820]" /></div>
        </div>
        <div className="ml-[6px] flex h-[21px] grow items-center bg-[#4d4d4d] pl-[2px] pt-[7px] text-[#151515]">
          <span className="w-[42px] text-[7.1px] font-semibold">1-Operator</span>
          <div className="flex h-[14px] grow border-2 border-r-0 border-black">
            <span className="w-[11px] bg-[#9e9e9e]" /><span className="w-[18px] bg-[#1f1f1f]" /><span className="w-[13px] bg-[#929797]" /><span className="w-[5px] bg-[#565b5b]" /><span className="grow bg-[#151515]" />
          </div>
        </div>
      </div>
      <div className="h-[6px] border-b border-[#484848] bg-[#707575]" />
      <div className="grow bg-[#5c5c5c]" />
    </div>
  )
}

export default function App() {
  return (
    <div className="h-[720px] w-[1280px] overflow-hidden bg-black">
      <div className="ml-[162px] h-full w-[956px] overflow-hidden bg-[#707070] font-['Inter','Liberation_Sans',sans-serif] text-[6.8px] font-medium text-[#141414]">
        <Transport />
        <div className="flex h-[526px]">
          <Browser />
          <Session />
        </div>
        <div className="h-[7px]" />
        <Devices />
        <StatusBar />
      </div>
    </div>
  )
}
